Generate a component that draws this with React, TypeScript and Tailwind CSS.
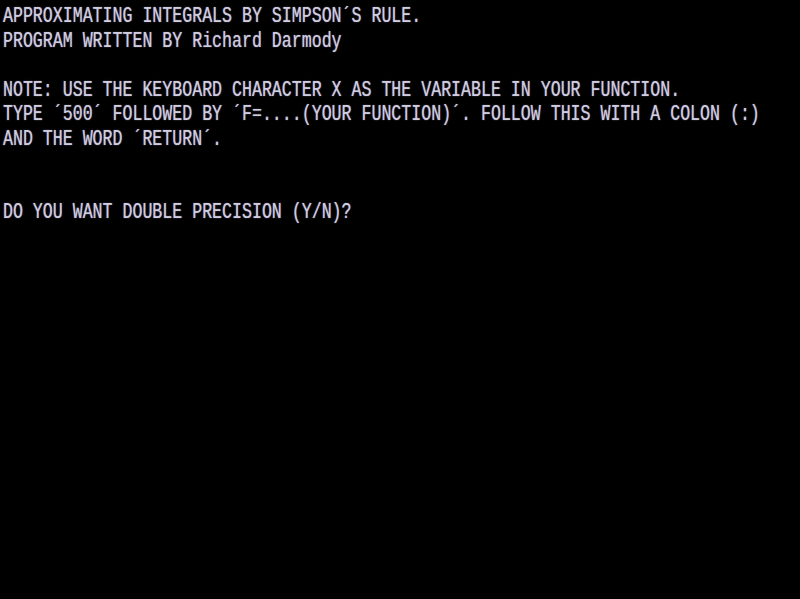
const lines = [
  'APPROXIMATING INTEGRALS BY SIMPSON´S RULE.',
  'PROGRAM WRITTEN BY Richard Darmody',
  '',
  'NOTE: USE THE KEYBOARD CHARACTER X AS THE VARIABLE IN YOUR FUNCTION.',
  'TYPE ´500´ FOLLOWED BY ´F=....(YOUR FUNCTION)´. FOLLOW THIS WITH A COLON (:)',
  'AND THE WORD ´RETURN´.',
  '',
  '',
  'DO YOU WANT DOUBLE PRECISION (Y/N)?',
];

export default function App() {
  return (
    <div className="w-[800px] h-[599px] bg-black overflow-hidden pl-[3px]">
      {lines.map((line, i) => (
        <div key={i} className="h-[24.5px] whitespace-pre">
          <span
            className="inline-block origin-top-left scale-y-[1.36] text-[16.6px] leading-[12px] text-[#d0cce2] [text-shadow:0_0_1px_rgba(208,204,226,0.7)]"
            style={{ fontFamily: '"Liberation Mono", monospace' }}
          >
            {line}
          </span>
        </div>
      ))}
    </div>
  );
}
